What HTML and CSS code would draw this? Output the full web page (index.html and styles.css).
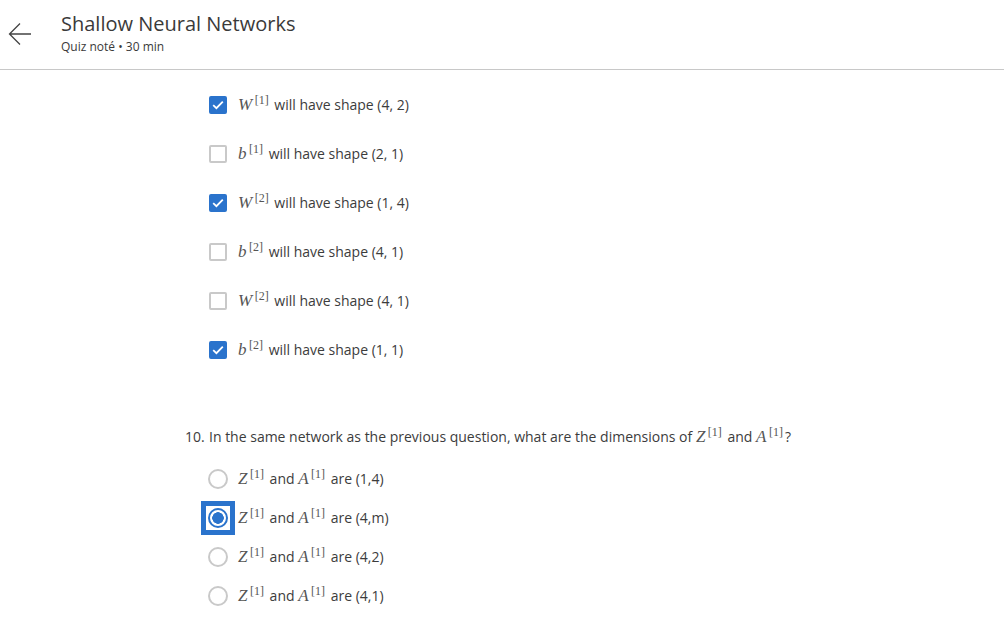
FILE: index.html
```html
<!DOCTYPE html>
<html>
<head>
<meta charset="utf-8">
<link rel="stylesheet" href="styles.css">
</head>
<body>
<header class="topbar">
  <div class="back">
    <svg width="24" height="24" viewBox="0 0 24 24"><path d="M12 1.5 L1.5 12 L12 22.5 M1.5 12 H23" fill="none" stroke="#444" stroke-width="1.3"/></svg>
  </div>
  <div class="titles">
    <div class="title">Shallow Neural Networks</div>
    <div class="sub">Quiz noté • 30 min</div>
  </div>
</header>
<main class="content">
  <ul class="opts checks">
    <li class="opt"><span class="ctl"><span class="cb on"><svg width="12" height="10" viewBox="0 0 12 10"><path d="M1.2 5.2 L4.4 8.2 L10.8 1.6" fill="none" stroke="#fff" stroke-width="1.8"/></svg></span></span><span class="txt"><span class="mi">W</span><span class="sup">[1]</span> will have shape (4, 2)</span></li>
    <li class="opt"><span class="ctl"><span class="cb"></span></span><span class="txt"><span class="mi">b</span><span class="sup">[1]</span> will have shape (2, 1)</span></li>
    <li class="opt"><span class="ctl"><span class="cb on"><svg width="12" height="10" viewBox="0 0 12 10"><path d="M1.2 5.2 L4.4 8.2 L10.8 1.6" fill="none" stroke="#fff" stroke-width="1.8"/></svg></span></span><span class="txt"><span class="mi">W</span><span class="sup">[2]</span> will have shape (1, 4)</span></li>
    <li class="opt"><span class="ctl"><span class="cb"></span></span><span class="txt"><span class="mi">b</span><span class="sup">[2]</span> will have shape (4, 1)</span></li>
    <li class="opt"><span class="ctl"><span class="cb"></span></span><span class="txt"><span class="mi">W</span><span class="sup">[2]</span> will have shape (4, 1)</span></li>
    <li class="opt"><span class="ctl"><span class="cb on"><svg width="12" height="10" viewBox="0 0 12 10"><path d="M1.2 5.2 L4.4 8.2 L10.8 1.6" fill="none" stroke="#fff" stroke-width="1.8"/></svg></span></span><span class="txt"><span class="mi">b</span><span class="sup">[2]</span> will have shape (1, 1)</span></li>
  </ul>
  <p class="question"><span class="num">10.</span>In the same network as the previous question, what are the dimensions of <span class="mi">Z</span><span class="sup">[1]</span> and <span class="mi">A</span><span class="sup">[1]</span>?</p>
  <ul class="opts radios">
    <li class="opt"><span class="ctl"><span class="rd"></span></span><span class="txt"><span class="mi">Z</span><span class="sup">[1]</span> and <span class="mi">A</span><span class="sup">[1]</span> are (1,4)</span></li>
    <li class="opt"><span class="ctl focus"><span class="rd on"></span></span><span class="txt"><span class="mi">Z</span><span class="sup">[1]</span> and <span class="mi">A</span><span class="sup">[1]</span> are (4,m)</span></li>
    <li class="opt"><span class="ctl"><span class="rd"></span></span><span class="txt"><span class="mi">Z</span><span class="sup">[1]</span> and <span class="mi">A</span><span class="sup">[1]</span> are (4,2)</span></li>
    <li class="opt"><span class="ctl"><span class="rd"></span></span><span class="txt"><span class="mi">Z</span><span class="sup">[1]</span> and <span class="mi">A</span><span class="sup">[1]</span> are (4,1)</span></li>
  </ul>
</main>
</body>
</html>
```
FILE: styles.css
```css
* { box-sizing: border-box; }
html, body { margin: 0; padding: 0; background: #fff; }
body { font-family: "Open Sans", "Noto Sans", sans-serif; color: #3c3c3c; }

.topbar {
  height: 70px;
  border-bottom: 1px solid #c8c8c8;
  display: flex;
  align-items: flex-start;
}
.back { width: 61px; padding: 22px 0 0 8px; }
.back svg { display: block; }
.titles { padding-top: 10px; }
.title { font-size: 20px; line-height: 28px; color: #3a3a3a; }
.sub { font-size: 12px; line-height: 16px; color: #3a3a3a; margin-top: 1px; }

.content { padding-left: 185px; }
.opts { list-style: none; margin: 0; padding: 0 0 0 16px; }
.checks { padding-top: 10px; }
.checks .opt { height: 49px; }
.radios .opt { height: 39px; }
.radios { margin-top: 11px; }
.opt { display: flex; align-items: center; font-size: 14px; }
.ctl { width: 34px; height: 34px; display: flex; align-items: center; justify-content: center; margin-right: 3px; flex: none; }
.ctl.focus { border: 5px solid #2a73cc; background: #fff; }
.cb { width: 18px; height: 18px; border: 2px solid #c9c9c9; border-radius: 2px; background: #fff; display: flex; align-items: center; justify-content: center; }
.cb.on { background: #2a73cc; border-color: #2a73cc; }
.rd { width: 20px; height: 20px; border: 2px solid #c9c9c9; border-radius: 50%; background: #fff; flex: none; }
.rd.on { border: 2px solid #2a73cc; background: radial-gradient(circle, #2a73cc 0 5.5px, #fff 6px); }

.mi { font-family: "Liberation Serif", "DejaVu Serif", serif; font-style: italic; font-size: 17px; color: #555; letter-spacing: 0.5px; }
.sup { font-family: "Liberation Serif", "DejaVu Serif", serif; font-size: 12px; position: relative; top: -6px; margin-left: 2px; margin-right: 2px; color: #555; }
.txt { white-space: nowrap; }

.question { margin: 53px 0 0; font-size: 14px; line-height: 20px; }
.question .num { display: inline-block; width: 24px; }
```
